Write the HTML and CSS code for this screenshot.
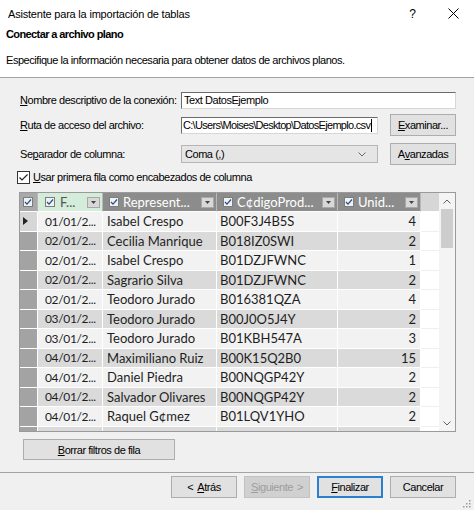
FILE: index.html
```html
<!DOCTYPE html>
<html lang="es">
<head>
<meta charset="utf-8">
<title>Asistente para la importación de tablas</title>
<link rel="stylesheet" href="styles.css">
</head>
<body>
<div class="dialog">
  <div class="titlebar">
    <span class="title">Asistente para la importación de tablas</span>
    <span class="help">?</span>
    <svg class="close" width="11" height="11" viewBox="0 0 11 11"><path d="M0.5 0.5L10.5 10.5M10.5 0.5L0.5 10.5" stroke="#000" stroke-width="1" fill="none"/></svg>
  </div>
  <div class="header">
    <div class="heading">Conectar a archivo plano</div>
    <div class="desc">Especifique la información necesaria para obtener datos de archivos planos.</div>
  </div>
  <div class="body">
    <div class="row row-name">
      <span class="lbl"><u>N</u>ombre descriptivo de la conexión:</span>
      <div class="input wide">Text DatosEjemplo</div>
    </div>
    <div class="row row-path">
      <span class="lbl"><u>R</u>uta de acceso del archivo:</span>
      <div class="input path">C:\Users\Moises\Desktop\DatosEjemplo.csv<span class="caret"></span></div>
      <div class="btn side"><u>E</u>xaminar...</div>
    </div>
    <div class="row row-sep">
      <span class="lbl">Se<u>p</u>arador de columna:</span>
      <div class="select"><span>Coma (,)</span><svg width="8" height="5" viewBox="0 0 8 5"><path d="M0.5 0.5L4 4L7.5 0.5" stroke="#6a6a6a" stroke-width="1" fill="none"/></svg></div>
      <div class="btn side">A<u>v</u>anzadas</div>
    </div>
    <div class="row row-check">
      <svg class="check" width="13" height="13" viewBox="0 0 13 13"><rect x="0.5" y="0.5" width="12" height="12" fill="#fff" stroke="#333"/><path d="M2.5 6.5L5 9L10.5 3.5" stroke="#222" stroke-width="1.2" fill="none"/></svg>
      <span class="check-label"><u>U</u>sar primera fila como encabezados de columna</span>
    </div>

    <div class="grid-wrap">
      <div class="grid">
        <div class="hrow">
          <div class="hc rh"><svg class="hcb" width="10" height="10" viewBox="0 0 10 10"><rect x="0.5" y="0.5" width="9" height="9" fill="#eef1f6" stroke="#7d7d7d"/><path d="M2 5L4 7.2L8 2.5" stroke="#2c4a7a" stroke-width="1.2" fill="none"/></svg></div>
          <div class="hc sel"><svg class="hcb" width="10" height="10" viewBox="0 0 10 10"><rect x="0.5" y="0.5" width="9" height="9" fill="#eef1f6" stroke="#7d7d7d"/><path d="M2 5L4 7.2L8 2.5" stroke="#2c4a7a" stroke-width="1.2" fill="none"/></svg><span class="ht">F...</span><span class="dd"><svg width="5" height="3" viewBox="0 0 5 3"><path d="M0 0H5L2.5 3Z" fill="#444"/></svg></span></div>
          <div class="hc"><svg class="hcb" width="10" height="10" viewBox="0 0 10 10"><rect x="0.5" y="0.5" width="9" height="9" fill="#eef1f6" stroke="#7d7d7d"/><path d="M2 5L4 7.2L8 2.5" stroke="#2c4a7a" stroke-width="1.2" fill="none"/></svg><span class="ht">Represent...</span><span class="dd"><svg width="5" height="3" viewBox="0 0 5 3"><path d="M0 0H5L2.5 3Z" fill="#444"/></svg></span></div>
          <div class="hc"><svg class="hcb" width="10" height="10" viewBox="0 0 10 10"><rect x="0.5" y="0.5" width="9" height="9" fill="#eef1f6" stroke="#7d7d7d"/><path d="M2 5L4 7.2L8 2.5" stroke="#2c4a7a" stroke-width="1.2" fill="none"/></svg><span class="ht">C¢digoProd...</span><span class="dd"><svg width="5" height="3" viewBox="0 0 5 3"><path d="M0 0H5L2.5 3Z" fill="#444"/></svg></span></div>
          <div class="hc"><svg class="hcb" width="10" height="10" viewBox="0 0 10 10"><rect x="0.5" y="0.5" width="9" height="9" fill="#eef1f6" stroke="#7d7d7d"/><path d="M2 5L4 7.2L8 2.5" stroke="#2c4a7a" stroke-width="1.2" fill="none"/></svg><span class="ht">Unid...</span><span class="dd"><svg width="5" height="3" viewBox="0 0 5 3"><path d="M0 0H5L2.5 3Z" fill="#444"/></svg></span></div>
          <div class="hc fill"></div>
        </div>

        <div class="drow light">
          <div class="c rh cur"><svg width="5" height="8" viewBox="0 0 5 8"><path d="M0 0L5 4L0 8Z" fill="#222"/></svg></div>
          <div class="c d">01/01/2...</div><div class="c r">Isabel Crespo</div><div class="c k">B00F3J4B5S</div><div class="c n">4</div><div class="c f"></div>
        </div>
        <div class="drow dark">
          <div class="c rh"></div>
          <div class="c d">02/01/2...</div><div class="c r">Cecilia Manrique</div><div class="c k">B018IZ0SWI</div><div class="c n">2</div><div class="c f"></div>
        </div>
        <div class="drow light">
          <div class="c rh"></div>
          <div class="c d">02/01/2...</div><div class="c r">Isabel Crespo</div><div class="c k">B01DZJFWNC</div><div class="c n">1</div><div class="c f"></div>
        </div>
        <div class="drow dark">
          <div class="c rh"></div>
          <div class="c d">02/01/2...</div><div class="c r">Sagrario Silva</div><div class="c k">B01DZJFWNC</div><div class="c n">2</div><div class="c f"></div>
        </div>
        <div class="drow light">
          <div class="c rh"></div>
          <div class="c d">02/01/2...</div><div class="c r">Teodoro Jurado</div><div class="c k">B016381QZA</div><div class="c n">4</div><div class="c f"></div>
        </div>
        <div class="drow dark">
          <div class="c rh"></div>
          <div class="c d">03/01/2...</div><div class="c r">Teodoro Jurado</div><div class="c k">B00J0O5J4Y</div><div class="c n">2</div><div class="c f"></div>
        </div>
        <div class="drow light">
          <div class="c rh"></div>
          <div class="c d">03/01/2...</div><div class="c r">Teodoro Jurado</div><div class="c k">B01KBH547A</div><div class="c n">3</div><div class="c f"></div>
        </div>
        <div class="drow dark">
          <div class="c rh"></div>
          <div class="c d">04/01/2...</div><div class="c r">Maximiliano Ruiz</div><div class="c k">B00K15Q2B0</div><div class="c n">15</div><div class="c f"></div>
        </div>
        <div class="drow light">
          <div class="c rh"></div>
          <div class="c d">04/01/2...</div><div class="c r">Daniel Piedra</div><div class="c k">B00NQGP42Y</div><div class="c n">2</div><div class="c f"></div>
        </div>
        <div class="drow dark">
          <div class="c rh"></div>
          <div class="c d">04/01/2...</div><div class="c r">Salvador Olivares</div><div class="c k">B00NQGP42Y</div><div class="c n">2</div><div class="c f"></div>
        </div>
        <div class="drow light">
          <div class="c rh"></div>
          <div class="c d">04/01/2...</div><div class="c r">Raquel G¢mez</div><div class="c k">B01LQV1YHO</div><div class="c n">2</div><div class="c f"></div>
        </div>
        <div class="drow dark">
          <div class="c rh"></div>
          <div class="c d"></div><div class="c r"></div><div class="c k"></div><div class="c n"></div><div class="c f"></div>
        </div>
      </div>
      <div class="vscroll">
        <svg class="arrow" width="8" height="5" viewBox="0 0 8 5"><path d="M0.5 4.5L4 1L7.5 4.5" stroke="#606060" stroke-width="1" fill="none"/></svg>
        <div class="track"><div class="thumb"></div></div>
        <svg class="arrow" width="8" height="5" viewBox="0 0 8 5"><path d="M0.5 0.5L4 4L7.5 0.5" stroke="#606060" stroke-width="1" fill="none"/></svg>
      </div>
    </div>

    <div class="btn clear"><u>B</u>orrar filtros de fila</div>
  </div>
  <div class="footer">
    <div class="btn foot"><span class="lt">&lt;</span><u>A</u>trás</div>
    <div class="btn foot disabled"><u>S</u>iguiente<span class="gt">&gt;</span></div>
    <div class="btn foot default"><u>F</u>inalizar</div>
    <div class="btn foot">Cancelar</div>
    <svg class="grip" width="9" height="9" viewBox="0 0 9 9"><g fill="#9a9a9a"><rect x="7" y="1" width="1.5" height="1.5"/><rect x="4" y="4" width="1.5" height="1.5"/><rect x="7" y="4" width="1.5" height="1.5"/><rect x="1" y="7" width="1.5" height="1.5"/><rect x="4" y="7" width="1.5" height="1.5"/><rect x="7" y="7" width="1.5" height="1.5"/></g></svg>
  </div>
</div>
</body>
</html>
```

FILE: styles.css
```css
* { box-sizing: border-box; margin: 0; padding: 0; }
html, body { width: 474px; height: 510px; overflow: hidden; }
body {
  background: #f0f0f0;
  font-family: "Liberation Sans", Arial, sans-serif;
  font-size: 11px;
  letter-spacing: -0.45px;
  color: #000;
}
u { text-decoration: underline; text-underline-offset: 1px; }

.dialog {
  position: relative;
  width: 474px;
  height: 510px;
  display: flex;
  flex-direction: column;
  background: #f0f0f0;
}

/* title bar */
.titlebar {
  height: 27px;
  background: #fff;
  display: flex;
  align-items: center;
  padding-left: 8px;
}
.title { flex: 1; letter-spacing: -0.2px; }
.help { font-size: 12px; letter-spacing: 0; margin-right: 32px; }
.close { margin-right: 15px; }

/* header */
.header {
  height: 51px;
  background: #fff;
  border-bottom: 1px solid #a3a3a3;
  padding-left: 6px;
}
.heading { font-weight: bold; line-height: 14px; letter-spacing: -0.6px; }
.desc { line-height: 14px; margin-top: 12px; }

/* body */
.body {
  height: 394px;
  padding-left: 20px;
  display: flex;
  flex-direction: column;
}
.row { display: flex; align-items: center; }
.lbl { width: 161px; flex: none; }
.row-name { margin-top: 13px; height: 18px; }
.row-path { margin-top: 5px; height: 22px; }
.row-sep { margin-top: 7px; height: 22px; }
.row-check { margin-top: 6px; height: 12px; }

.input {
  width: 197px;
  height: 17px;
  background: #fff;
  border-top: 1px solid #6b6b6b;
  border-left: 1px solid #6b6b6b;
  border-right: 1px solid #d6d6d6;
  border-bottom: 1px solid #d6d6d6;
  padding-left: 2px;
  line-height: 15px;
  white-space: nowrap;
  overflow: hidden;
  display: flex;
  align-items: center;
}
.input.wide { width: 275px; }
.input.path { letter-spacing: -0.7px; padding-left: 1px; }
.caret { display: inline-block; flex: none; width: 1px; height: 13px; background: #000; margin-left: 1px; }

.select {
  width: 197px;
  height: 18px;
  background: #e5e5e5;
  border: 1px solid #b5b5b5;
  display: flex;
  align-items: center;
  justify-content: space-between;
  padding: 0 11px 0 3px;
}

.btn {
  background: #e1e1e1;
  border: 1px solid #adadad;
  display: flex;
  align-items: center;
  justify-content: center;
  white-space: nowrap;
}
.btn.side { width: 66px; height: 22px; margin-left: 12px; }

.check { margin-left: -3px; flex: none; }
.check-label { margin-left: 3px; }

/* data grid */
.grid-wrap {
  margin-top: 9px;
  margin-left: -1px;
  width: 437px;
  height: 240px;
  border: 1px solid #9a9a9a;
  display: flex;
  background: #fff;
  font-family: Lato, "Open Sans", sans-serif;
  font-size: 13px;
  letter-spacing: 0;
}
.grid { width: 419px; height: 238px; overflow: hidden; flex: none; }
.hrow, .drow {
  display: grid;
  grid-template-columns: 18px 65px 114px 121px 83px 18px;
}
.hrow { height: 19px; }
.drow { height: 19.5px; }

.hc {
  background: #8c8c8c;
  border-right: 1px solid #b9b9b9;
  border-bottom: 1px solid #fff;
  display: flex;
  align-items: center;
  padding-left: 6px;
  color: #fff;
  overflow: hidden;
}
.hc.rh { background: #a9a9a9; padding-left: 3px; }
.hc.sel { background: #d4ecda; color: #555; padding-left: 7px; }
.hc.fill { background: #d6d6d6; border-right: none; }
.hcb { flex: none; }
.ht { margin-left: 4px; white-space: nowrap; }
.hc.sel .ht { margin-left: 5px; }
.dd {
  margin-left: auto;
  margin-right: 2px;
  width: 13px;
  height: 11px;
  flex: none;
  background: #d8d8d8;
  border: 1px solid #a8a8a8;
  display: flex;
  align-items: center;
  justify-content: center;
}

.c {
  border-right: 1px solid #fff;
  border-bottom: 1px solid #fff;
  display: flex;
  align-items: center;
  white-space: nowrap;
  overflow: hidden;
  color: #1e1e1e;
}
.light .c { background: #f2f2f2; }
.dark .c { background: #dadada; }
.c.rh { background: #a3a3a3 !important; }
.c.rh.cur { background: #d6d6d6 !important; padding-left: 3px; }
.c.d { padding-left: 7px; font-size: 12px; letter-spacing: -0.35px; }
.c.r { padding-left: 4px; }
.c.k { padding-left: 3px; }
.c.n { justify-content: flex-end; padding-right: 4px; }
.c.f { background: #fff !important; border-right: none; border-bottom: 1px solid #efefef; }

.vscroll {
  width: 16px;
  height: 238px;
  background: #f4f4f4;
  display: flex;
  flex-direction: column;
  align-items: center;
}
.vscroll .arrow { flex: none; margin: 6px 0 5px; }
.track { flex: 1; width: 100%; padding: 0 2px; }
.thumb { width: 12px; height: 39px; background: #cdcdcd; }

.btn.clear { margin-top: 7px; margin-left: 3px; width: 152px; height: 21px; }

/* footer */
.footer {
  flex: 1;
  border-top: 1px solid #a3a3a3;
  display: flex;
  justify-content: flex-end;
  align-items: flex-start;
  padding: 3px 18px 0 0;
  gap: 7px;
}
.btn.foot { width: 66px; height: 22px; }
.lt { margin-right: 4px; }
.gt { margin-left: 4px; }
.btn.disabled { background: #d0d0d0; border-color: #c2c2c2; color: #9d9d9d; }
.btn.default { border: 2px solid #2a7fcf; }
.grip { position: absolute; right: 3px; bottom: 2px; }
```
